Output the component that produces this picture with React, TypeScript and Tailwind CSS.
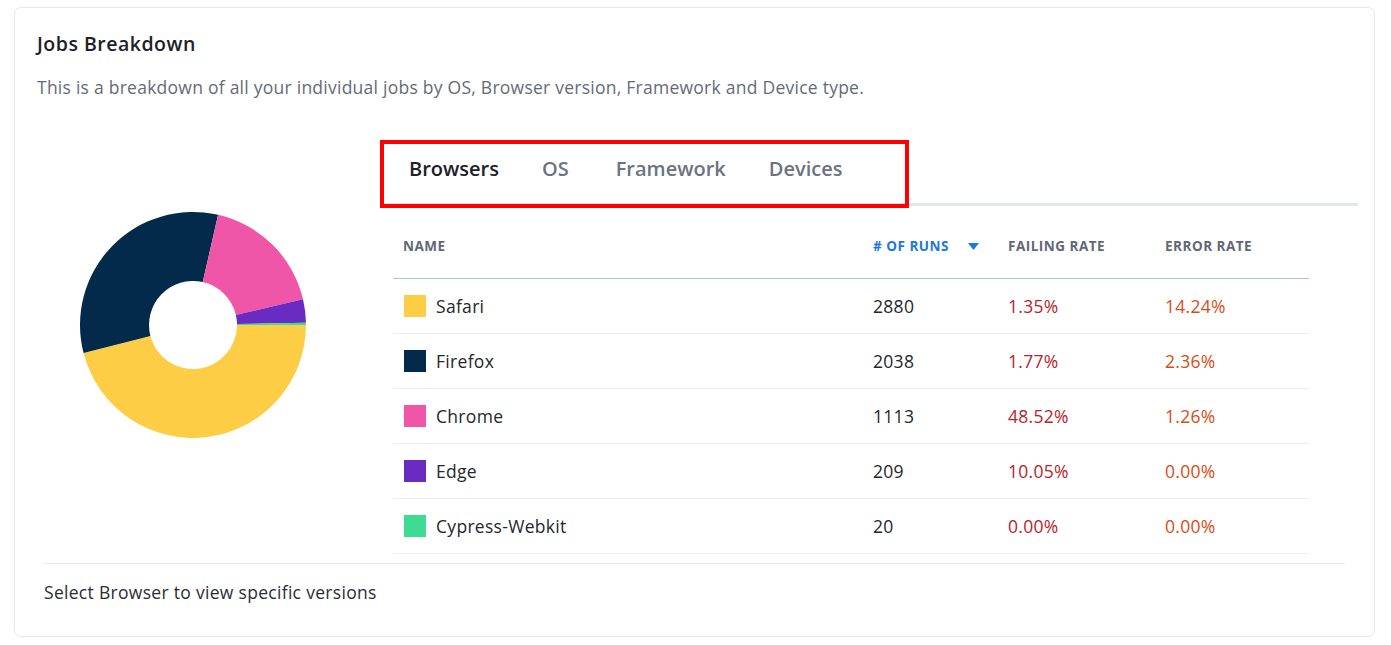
import React from 'react';

interface BrowserRow {
  name: string;
  color: string;
  runs: number;
  failing: string;
  error: string;
}

const rows: BrowserRow[] = [
  { name: 'Safari', color: '#fecd46', runs: 2880, failing: '1.35%', error: '14.24%' },
  { name: 'Firefox', color: '#03294b', runs: 2038, failing: '1.77%', error: '2.36%' },
  { name: 'Chrome', color: '#ef56a7', runs: 1113, failing: '48.52%', error: '1.26%' },
  { name: 'Edge', color: '#6a2bc3', runs: 209, failing: '10.05%', error: '0.00%' },
  { name: 'Cypress-Webkit', color: '#3ddc92', runs: 20, failing: '0.00%', error: '0.00%' },
];

const tabs = ['Browsers', 'OS', 'Framework', 'Devices'];

// annulus slice, angles in radians, clockwise from 3 o'clock
const slicePath = (cx: number, cy: number, r: number, ir: number, a0: number, a1: number) => {
  const large = a1 - a0 > Math.PI ? 1 : 0;
  const p = (rad: number, a: number) => `${cx + rad * Math.cos(a)} ${cy + rad * Math.sin(a)}`;
  return `M ${p(r, a0)} A ${r} ${r} 0 ${large} 1 ${p(r, a1)} L ${p(ir, a1)} A ${ir} ${ir} 0 ${large} 0 ${p(ir, a0)} Z`;
};

const Donut: React.FC = () => {
  const total = rows.reduce((s, r) => s + r.runs, 0);
  let start = 0;
  return (
    <svg width="228" height="228" viewBox="0 0 228 228">
      {rows.map(r => {
        const sweep = (r.runs / total) * Math.PI * 2;
        const d = slicePath(114, 114, 113, 44, start, start + sweep);
        start += sweep;
        return <path key={r.name} d={d} fill={r.color} />;
      })}
    </svg>
  );
};

export default function App() {
  return (
    <div className="bg-white min-h-screen pt-[7px] pl-[14px] pr-[16px] font-['Open_Sans',_'Liberation_Sans',_sans-serif]">
      <div className="border border-[#e6e8ee] rounded-[7px] bg-white">
        {/* Heading */}
        <div className="pl-[22px] pt-[23px]">
          <h2 className="text-[19.5px] leading-[26px] font-semibold tracking-[0.5px] text-[#1d2129]">Jobs Breakdown</h2>
          <p className="mt-[18px] text-[17.5px] leading-[24px] tracking-[0.25px] text-[#646b78]">
            This is a breakdown of all your individual jobs by OS, Browser version, Framework and Device type.
          </p>
        </div>

        <div className="flex mt-[41px] pl-[22px]">
          {/* Chart */}
          <div className="w-[343px] shrink-0 pl-[42px] pt-[71px]">
            <Donut />
          </div>

          {/* Tabs + table */}
          <div className="flex-1 pr-[16px]">
            <div className="relative h-[66px] border-b-[3px] border-[#e1e5ee] flex items-center gap-[43px] pl-[29px] pb-[6px]">
              {tabs.map((t, i) => (
                <span
                  key={t}
                  className={`text-[20px] font-semibold ${i === 0 ? 'text-[#1d2129]' : 'text-[#6b7382]'} ${t === 'OS' ? 'pr-[4px]' : ''}`}
                >
                  {t}
                </span>
              ))}
              <div className="absolute left-0 top-0 w-[529px] h-[68px] border-4 border-[#ff0000] pointer-events-none" />
            </div>

            <div className="ml-[13px] w-[916px]">
              <div className="grid grid-cols-[470px_135px_157px_1fr] pl-[10px] h-[73px] pt-[8px] items-center border-b border-[#b4bfcf] text-[13.5px] font-bold tracking-[0.5px] text-[#5f6877]">
                <span>NAME</span>
                <span className="flex items-center text-[#1b78de]">
                  # OF RUNS
                  <svg className="ml-[19px]" width="11" height="7" viewBox="0 0 11 7">
                    <path d="M0 0 H11 L5.5 7 Z" fill="#1b78de" />
                  </svg>
                </span>
                <span>FAILING RATE</span>
                <span>ERROR RATE</span>
              </div>

              {rows.map(r => (
                <div
                  key={r.name}
                  className="grid grid-cols-[470px_135px_157px_1fr] pl-[10px] h-[55px] items-center border-b border-[#eceef2] text-[17.5px] tracking-[0.3px] text-[#24272d]"
                >
                  <span className="flex items-center">
                    <span className="w-[22px] h-[22px] mr-[10px] ml-px" style={{ backgroundColor: r.color }} />
                    {r.name}
                  </span>
                  <span>{r.runs}</span>
                  <span className="text-[#b8232c]">{r.failing}</span>
                  <span className="text-[#d94c16]">{r.error}</span>
                </div>
              ))}
            </div>
          </div>
        </div>

        {/* Footer */}
        <div className="mx-[29px] mt-[9px] border-t border-[#e6e8ee] pt-[16px] pb-[32px]">
          <p className="text-[17.5px] leading-[24px] tracking-[0.3px] text-[#2a2d33]">Select Browser to view specific versions</p>
        </div>
      </div>
    </div>
  );
}
